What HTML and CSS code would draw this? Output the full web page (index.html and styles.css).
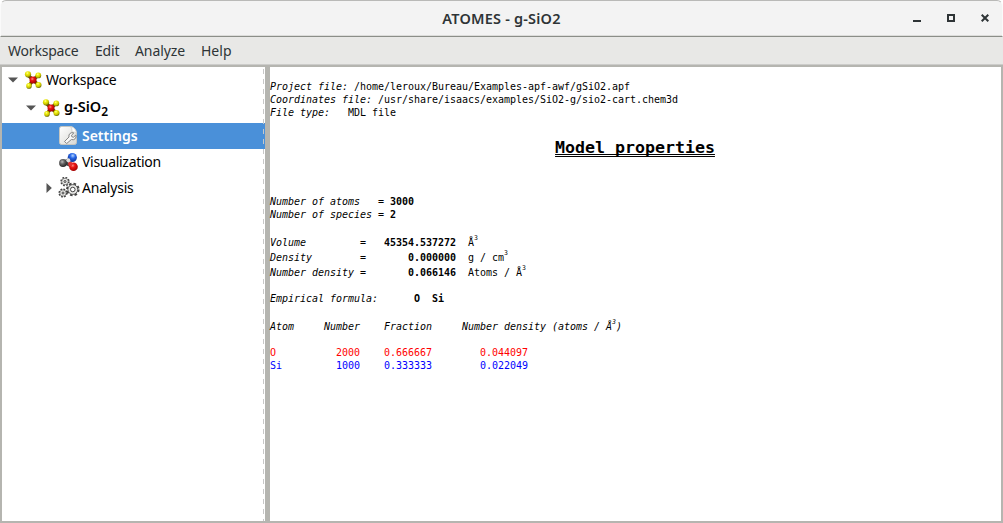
FILE: index.html
```html
<!DOCTYPE html>
<html lang="en">
<head>
<meta charset="utf-8">
<title>ATOMES - g-SiO2</title>
<link rel="stylesheet" href="styles.css">
</head>
<body>
<svg class="defs" width="0" height="0" aria-hidden="true">
  <defs>
    <radialGradient id="yel" cx=".4" cy=".3" r=".7"><stop offset="0" stop-color="#ffffa0"/><stop offset=".3" stop-color="#f0f010"/><stop offset=".7" stop-color="#c8c400"/><stop offset="1" stop-color="#6c6a00"/></radialGradient>
    <radialGradient id="red" cx=".4" cy=".35" r=".7"><stop offset="0" stop-color="#ff9080"/><stop offset=".35" stop-color="#ec1414"/><stop offset="1" stop-color="#900"/></radialGradient>
    <radialGradient id="blu" cx=".55" cy=".3" r=".7"><stop offset="0" stop-color="#b4d4ff"/><stop offset=".4" stop-color="#2868e8"/><stop offset="1" stop-color="#0c2c90"/></radialGradient>
    <radialGradient id="gry" cx=".4" cy=".35" r=".7"><stop offset="0" stop-color="#bbb"/><stop offset=".4" stop-color="#666"/><stop offset="1" stop-color="#202020"/></radialGradient>
    <linearGradient id="page" x2="1" y2="1"><stop offset="0" stop-color="#fff"/><stop offset="1" stop-color="#d8d8d4"/></linearGradient>
    <symbol id="molecule" viewBox="0 0 18 18">
      <path d="M4 4l5 5-3.700 5.500M14 4.500L9 9l5.500 5" fill="none" stroke="#6e4400" stroke-width="3.200"/>
      <circle cx="9" cy="9" r="3.500" fill="url(#red)"/>
      <circle cx="4" cy="3.300" r="3.100" fill="url(#yel)"/><circle cx="14.300" cy="4.400" r="2.900" fill="url(#yel)"/>
      <circle cx="5" cy="14.900" r="2.800" fill="url(#yel)"/><circle cx="14.500" cy="13.900" r="3" fill="url(#yel)"/>
    </symbol>
  </defs>
</svg>
<div class="window">
  <header class="titlebar">
    <h1 class="title">ATOMES - g-SiO2</h1>
    <div class="controls">
      <svg width="8" height="8" viewBox="0 0 8 8"><path d="M0 6h8v2H0z"/></svg>
      <svg width="8" height="8" viewBox="0 0 8 8"><path d="M0 0h8v8H0zM2 2v4h4V2z" fill-rule="evenodd"/></svg>
      <svg width="8" height="8" viewBox="0 0 8 8"><path d="M.7.7l6.600 6.600M7.300.7L.7 7.300" stroke="#2e3436" stroke-width="2"/></svg>
    </div>
  </header>
  <nav class="menubar"><span class="m1">Workspace</span><span class="m2">Edit</span><span class="m3">Analyze</span><span class="m4">Help</span></nav>
  <main class="panes">
    <aside class="tree">
      <div class="row root">
        <svg class="arrow" width="10" height="6" viewBox="0 0 10 6"><path d="M0 .5h10L5 5.500z"/></svg>
        <svg class="icon mol" width="18" height="18"><use href="#molecule"/></svg><span class="workspace">Workspace</span>
      </div>
      <div class="row project">
        <svg class="arrow" width="10" height="6" viewBox="0 0 10 6"><path d="M0 .5h10L5 5.500z"/></svg>
        <svg class="icon mol" width="18" height="18"><use href="#molecule"/></svg><span class="name">g-SiO<sub>2</sub></span>
      </div>
      <div class="row leaf selected">
        <svg class="icon" width="22" height="22" viewBox="0 0 22 22">
          <path d="M3.500 1.500h9q5.500 1 6 7v9q0 2-2 2h-13q-2 0-2-2v-14q0-2 2-2z" fill="url(#page)" stroke="#c6c6c0"/>
          <path d="M12.500 1.500q2 2 1.500 5.500 3-.5 4.500 1.500-.5-6-6-7z" fill="#fff" stroke="#c6c6c0" stroke-width=".7"/>
          <path d="M18 17.500l-4.500-4.500a3.400 3.400 0 0 0-4.800-4l2.300 2.200-.4 1.600-1.700.4-2.200-2.200a3.400 3.400 0 0 0 4.400 4.500l4.700 4z" transform="matrix(-1 0 0 1 24.500 -1)" fill="#f8f8f8" stroke="#858585"/>
        </svg><span class="settings">Settings</span>
      </div>
      <div class="row leaf">
        <svg class="icon" width="22" height="22" viewBox="0 0 22 22">
          <path d="M6 11.500L15 6.500M6 11.500l9 4" stroke="#444" stroke-width="3.500"/>
          <circle cx="5" cy="12" r="3.900" fill="url(#gry)"/><circle cx="14.300" cy="6.500" r="4.600" fill="url(#blu)"/>
          <circle cx="10.300" cy="9.300" r="2" fill="#ddd"/><circle cx="15.500" cy="15.800" r="4.300" fill="url(#red)"/><circle cx="12.300" cy="13" r="2.300" fill="#e03030"/>
        </svg><span class="visual">Visualization</span>
      </div>
      <div class="row analysis">
        <svg class="arrow" width="6" height="10" viewBox="0 0 6 10"><path d="M.5 0v10L5.800 5z"/></svg>
        <svg class="icon" width="22" height="22" viewBox="0 0 22 22">
          <g fill="#e9e9e7" stroke="#444">
            <circle cx="7" cy="4.500" r="3.800" stroke-width="1.800" stroke-dasharray="1.700 1.280"/><circle cx="7" cy="4.500" r="3.200" stroke-width=".5"/><circle cx="7" cy="4.500" r="1"/>
            <circle cx="5" cy="16" r="3.700" stroke-width="1.800" stroke-dasharray="1.700 1.200"/><circle cx="5" cy="16" r="3.100" stroke-width=".5"/><circle cx="5" cy="16" r="1"/>
            <circle cx="14.800" cy="12.500" r="5.500" stroke-width="2.600" stroke-dasharray="2.400 1.920"/><circle cx="14.800" cy="12.500" r="4.900" stroke-width=".8"/><circle cx="14.800" cy="12.500" r="2.300" fill="#fff" stroke-width="1"/>
          </g>
        </svg><span class="anal">Analysis</span>
      </div>
    </aside>
    <section class="report">
      <pre class="files"><i>Project file:</i> /home/leroux/Bureau/Examples-apf-awf/gSiO2.apf
<i>Coordinates file:</i> /usr/share/isaacs/examples/SiO2-g/sio2-cart.chem3d
<i>File type:</i>   MDL file</pre>
      <h2 class="heading"><span>Model properties</span></h2>
      <pre class="counts"><i>Number of atoms   = </i><b>3000</b>
<i>Number of species = </i><b>2</b></pre>
      <pre class="measures"><i>Volume         =</i>   <b>45354.537272</b>  Å<sup>3</sup>
<i>Density        =</i>       <b>0.000000</b>  g / cm<sup>3</sup>
<i>Number density =</i>       <b>0.066146</b>  Atoms / Å<sup>3</sup></pre>
      <pre class="formula"><i>Empirical formula:</i>      <b>O  Si</b></pre>
      <pre class="columns"><i>Atom     Number    Fraction     Number density (atoms / Å<sup>3</sup>)</i></pre>
      <pre class="species"><span class="oxygen">O          2000    0.666667        0.044097</span>
<span class="silicon">Si         1000    0.333333        0.022049</span></pre>
    </section>
  </main>
</div>
</body>
</html>
```
FILE: styles.css
```css
* { box-sizing: border-box; }
body { margin: 0; background: #fff; overflow: hidden; font-family: "Noto Sans", "Open Sans", sans-serif; font-size: 14px; color: #2e3436; }
.defs { display: block; }
.window { width: 1003px; height: 523px; display: flex; flex-direction: column; }
.titlebar { height: 37px; flex: none; display: grid; grid-template-columns: 1fr auto 1fr; align-items: center; background: #f3f3f3; border: 1px solid #fafafa; border-top-color: #b9b9b7; border-bottom-color: #8b8e88; border-radius: 6px 6px 0 0; box-shadow: inset 0 -1px #dcdcda; }
.title { grid-column: 2; margin: 0; padding-bottom: 2px; font-size: 14.5px; line-height: 20px; font-weight: 600; letter-spacing: .2px; }
.controls { justify-self: end; display: flex; gap: 26px; padding-right: 13px; padding-bottom: 1px; }
.controls svg { fill: #2e3436; display: block; }
.menubar { height: 28px; flex: none; display: flex; gap: 16px; padding-left: 8px; line-height: 28px; background: #e8e8e6; border-bottom: 1px solid #ccccca; white-space: nowrap; }
.m1 { width: 71px; letter-spacing: -.2px; }
.m2 { width: 24px; letter-spacing: -.2px; }
.m3 { width: 50px; letter-spacing: -.1px; }
.panes { flex: 1; min-height: 0; display: flex; border: 2px solid #b5b5b0; }
.tree { width: 263px; flex: none; position: relative; color: #000; }
.tree::after { content: ""; position: absolute; right: 1px; top: 2px; bottom: 0; width: 1px; background: repeating-linear-gradient(#c8c8c8 0 5px, transparent 5px 10px); }
.row { height: 26px; display: flex; align-items: center; line-height: 26px; white-space: nowrap; }
.row svg { display: block; flex: none; }
.arrow { fill: #555; }
.root { height: 26px; padding-left: 6px; }
.workspace { letter-spacing: -.2px; }
.mol { margin: 0 4px 0 6px; }
.project { height: 30px; padding-left: 24px; }
.name { font-weight: 600; font-size: 14.5px; padding-bottom: 5px; }
.name sub { font-size: 12px; vertical-align: -4px; line-height: 0; }
.leaf { padding-left: 56px; }
.leaf .icon { margin-right: 2px; }
.settings { letter-spacing: -.02px; }
.visual { letter-spacing: -.3px; }
.anal { letter-spacing: -.2px; }
.selected { background: #4a90d9; color: #fff; font-weight: 600; }
.analysis { padding-left: 44px; }
.analysis .icon { margin: 0 2px 0 6px; }
.report { flex: 1; border-left: 5px solid #b5b5b0; padding-top: 13px; color: #000; }
.report pre { margin: 0; font-family: "DejaVu Sans Mono", monospace; font-size: 10px; line-height: 13px; letter-spacing: -.02px; }
.heading { margin: 19px 1px 37px 0; height: 20px; text-align: center; font: bold 16.6px/20px "DejaVu Sans Mono", monospace; }
.heading span { text-decoration: underline double 1px; text-underline-offset: 1px; text-decoration-skip-ink: none; }
.report .measures { margin-top: 14px; line-height: 15px; }
.report sup { font-size: 6.5px; line-height: 0; vertical-align: 6px; }
.report .formula { margin-top: 12px; }
.report .columns { margin-top: 14px; line-height: 15px; }
.report .species { margin-top: 12px; }
.oxygen { color: #f00; }
.silicon { color: #00f; }
```
